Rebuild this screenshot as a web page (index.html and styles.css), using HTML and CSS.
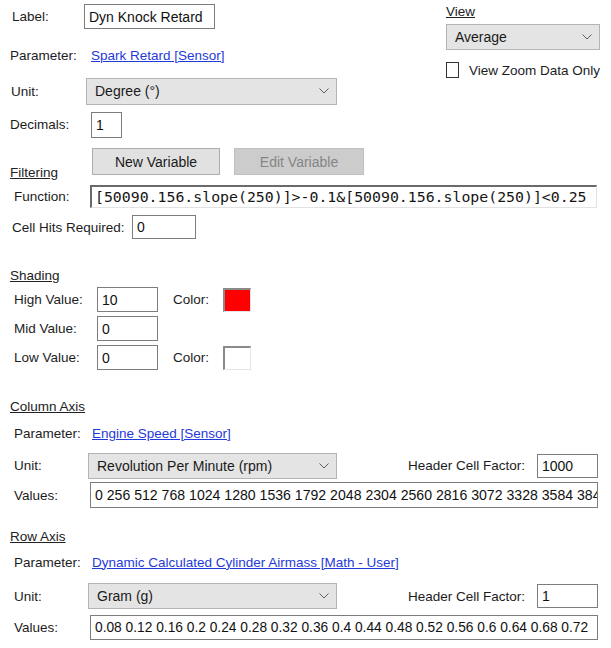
FILE: index.html
```html
<!DOCTYPE html>
<html lang="en">
<head>
    <meta charset="UTF-8">
    <meta name="viewport" content="width=device-width, initial-scale=1.0">
    <title>Histogram Settings</title>
    <link rel="stylesheet" href="styles.css">
</head>
<body>
    <div class="page">
        <div class="top">
            <div class="general">
                <div class="row r-label">
                    <span class="lbl w-label">Label:</span>
                    <input class="field f-label" type="text" value="Dyn Knock Retard">
                </div>
                <div class="row r-param">
                    <span class="lbl w-param">Parameter:</span>
                    <a href="#" class="link">Spark Retard [Sensor]</a>
                </div>
                <div class="row r-unit">
                    <span class="lbl w-unit">Unit:</span>
                    <div class="combo c-unit">
                        <span>Degree (&deg;)</span>
                        <svg class="chev" width="10" height="6" viewBox="0 0 10 6"><path d="M0.5 0.5 L5 5 L9.5 0.5" fill="none" stroke="#5f5f5f" stroke-width="1"/></svg>
                    </div>
                </div>
                <div class="row r-dec">
                    <span class="lbl w-dec">Decimals:</span>
                    <input class="field f-dec" type="text" value="1">
                </div>
            </div>
            <div class="view-panel">
                <div class="heading v-head">View</div>
                <div class="combo c-view">
                    <span>Average</span>
                    <svg class="chev" width="10" height="6" viewBox="0 0 10 6"><path d="M0.5 0.5 L5 5 L9.5 0.5" fill="none" stroke="#5f5f5f" stroke-width="1"/></svg>
                </div>
                <div class="check-row">
                    <span class="checkbox"></span>
                    <span class="lbl">View Zoom Data Only</span>
                </div>
            </div>
        </div>

        <div class="btn-row">
            <span class="heading filt-head">Filtering</span>
            <button class="btn">New Variable</button>
            <button class="btn btn-off">Edit Variable</button>
        </div>
        <div class="sub">
            <div class="row r-func">
                <span class="lbl w-func">Function:</span>
                <input class="field f-func" type="text" value="[50090.156.slope(250)]&gt;-0.1&amp;[50090.156.slope(250)]&lt;0.25">
            </div>
            <div class="row r-hits">
                <span class="lbl w-hits">Cell Hits Required:</span>
                <input class="field f-hits" type="text" value="0">
            </div>
        </div>

        <div class="heading sec-head shade-head">Shading</div>
        <div class="sub">
            <div class="row r-shade first">
                <span class="lbl w-shade">High Value:</span>
                <input class="field f-shade" type="text" value="10">
                <span class="lbl w-color">Color:</span>
                <span class="swatch red"></span>
            </div>
            <div class="row r-shade">
                <span class="lbl w-shade">Mid Value:</span>
                <input class="field f-shade" type="text" value="0">
            </div>
            <div class="row r-shade">
                <span class="lbl w-shade">Low Value:</span>
                <input class="field f-shade" type="text" value="0">
                <span class="lbl w-color">Color:</span>
                <span class="swatch"></span>
            </div>
        </div>

        <div class="heading sec-head col-head">Column Axis</div>
        <div class="sub">
            <div class="row r-aparam">
                <span class="lbl w-axis">Parameter:</span>
                <a href="#" class="link">Engine Speed [Sensor]</a>
            </div>
            <div class="row r-aunit">
                <span class="lbl w-axis-u">Unit:</span>
                <div class="combo c-axis">
                    <span>Revolution Per Minute (rpm)</span>
                    <svg class="chev" width="10" height="6" viewBox="0 0 10 6"><path d="M0.5 0.5 L5 5 L9.5 0.5" fill="none" stroke="#5f5f5f" stroke-width="1"/></svg>
                </div>
                <span class="lbl hcf">Header Cell Factor:</span>
                <input class="field f-hcf" type="text" value="1000">
            </div>
            <div class="row r-avals">
                <span class="lbl w-vals">Values:</span>
                <input class="field f-vals" type="text" value="0 256 512 768 1024 1280 1536 1792 2048 2304 2560 2816 3072 3328 3584 3840 4096 4352 4608">
            </div>
        </div>

        <div class="heading sec-head row-head">Row Axis</div>
        <div class="sub">
            <div class="row r-aparam r-rparam">
                <span class="lbl w-axis">Parameter:</span>
                <a href="#" class="link">Dynamic Calculated Cylinder Airmass [Math - User]</a>
            </div>
            <div class="row r-aunit r-runit">
                <span class="lbl w-axis-u">Unit:</span>
                <div class="combo c-axis">
                    <span>Gram (g)</span>
                    <svg class="chev" width="10" height="6" viewBox="0 0 10 6"><path d="M0.5 0.5 L5 5 L9.5 0.5" fill="none" stroke="#5f5f5f" stroke-width="1"/></svg>
                </div>
                <span class="lbl hcf">Header Cell Factor:</span>
                <input class="field f-hcf" type="text" value="1">
            </div>
            <div class="row r-avals r-rvals">
                <span class="lbl w-vals">Values:</span>
                <input class="field f-vals" type="text" value="0.08 0.12 0.16 0.2 0.24 0.28 0.32 0.36 0.4 0.44 0.48 0.52 0.56 0.6 0.64 0.68 0.72">
            </div>
        </div>
    </div>
</body>
</html>
```

FILE: styles.css
```css
body {
    margin: 0;
    background: #ffffff;
    font-family: "Liberation Sans", Arial, sans-serif;
    font-size: 13.5px;
    color: #1c1c1c;
}
.page {
    width: 611px;
    padding: 0 11px 0 10px;
    box-sizing: border-box;
}
.top {
    display: flex;
    height: 138px;
}
.general {
    flex: 1;
}
.row {
    display: flex;
    align-items: center;
}
.lbl {
    white-space: nowrap;
    flex-shrink: 0;
}
.link {
    color: #1f3ad8;
    text-decoration: underline;
    white-space: nowrap;
}
.heading {
    text-decoration: underline;
    line-height: 16px;
    height: 16px;
    color: #222;
}

/* inputs */
.field {
    box-sizing: border-box;
    margin: 0;
    border: 1px solid #7d7d7d;
    background: #fff;
    font-family: "Liberation Sans", Arial, sans-serif;
    font-size: 14px;
    color: #111;
    padding: 0 0 0 4px;
    outline: none;
}
.combo {
    box-sizing: border-box;
    display: flex;
    align-items: center;
    justify-content: space-between;
    background: #e4e4e4;
    border: 1px solid #b4b4b4;
    padding: 0 7px 0 8px;
    font-size: 14px;
    color: #1a1a1a;
}

/* general block */
.r-label { margin-top: 4px; height: 25px; }
.w-label { width: 74px; padding-left: 2px; box-sizing: border-box; }
.f-label { width: 131px; height: 25px; }
.r-param { margin-top: 13px; height: 26px; }
.w-param { width: 81px; }
.r-unit { margin-top: 10px; height: 26px; }
.w-unit { width: 76px; padding-left: 1px; box-sizing: border-box; }
.c-unit { width: 251px; height: 27px; }
.r-dec { margin-top: 7px; height: 27px; }
.w-dec { width: 81px; }
.f-dec { width: 31px; height: 26px; }

/* view */
.view-panel {
    width: 154px;
}
.v-head { margin-top: 4px; }
.c-view { margin-top: 4px; width: 154px; height: 26px; }
.check-row {
    display: flex;
    align-items: center;
    margin-top: 12px;
    height: 16px;
}
.checkbox {
    width: 16px;
    height: 16px;
    box-sizing: border-box;
    border: 1px solid #333;
    background: #fff;
    margin-right: 10px;
}

/* filtering */
.btn-row {
    display: flex;
    align-items: flex-end;
    margin-top: 10px;
    height: 27px;
}
.filt-head {
    width: 82px;
    margin-bottom: -6px;
}
.btn {
    box-sizing: border-box;
    height: 27px;
    width: 128px;
    margin: 0 14px 0 0;
    background: #e1e1e1;
    border: 1px solid #adadad;
    font-family: "Liberation Sans", Arial, sans-serif;
    font-size: 14px;
    color: #1a1a1a;
    padding: 0;
}
.btn-off {
    width: 130px;
    background: #cccccc;
    border-color: #bfbfbf;
    color: #858585;
}
.sub {
    padding-left: 4px;
}
.r-func { margin-top: 10px; height: 23px; }
.w-func { width: 76px; }
.f-func {
    flex: 1;
    margin-right: 3px;
    height: 23px;
    border-color: #6a6a6a #e2e2e2 #e2e2e2 #6a6a6a;
    border-width: 2px 1px 1px 2px;
    font-family: "DejaVu Sans Mono", "Liberation Mono", monospace;
    font-size: 14.85px;
    padding-left: 3px;
    color: #151515;
}
.r-hits { margin-top: 7px; height: 24px; }
.w-hits { width: 120px; margin-left: -2px; }
.f-hits { width: 64px; height: 24px; }

/* shading */
.sec-head { margin-top: 29px; }
.r-shade { margin-top: 4px; height: 25px; }
.r-shade.first { margin-top: 3px; }
.w-shade { width: 83px; }
.f-shade { width: 61px; height: 25px; }
.w-color { width: 50px; margin-left: 15px; }
.swatch {
    box-sizing: border-box;
    width: 28px;
    height: 24px;
    border: 1px solid;
    border-color: #8a8a8a #e6e6e6 #e6e6e6 #8a8a8a;
    border-width: 2px 1px 1px 2px;
    background: #fff;
}
.swatch.red { background: #ff0000; }

/* axes */
.r-aparam { margin-top: 10px; height: 16px; }
.w-axis { width: 78px; }
.r-aunit { margin-top: 12px; height: 25px; }
.w-axis-u { width: 74px; }
.c-axis { width: 249px; height: 26px; }
.hcf { margin-left: auto; margin-right: 12px; }
.f-hcf { width: 61px; height: 24px; margin-right: 2px; }
.r-avals { margin-top: 4px; height: 26px; }
.w-vals { width: 76px; }
.f-vals {
    flex: 1;
    height: 26px;
    margin-right: 2px;
    font-size: 14.1px;
}
.row-head { margin-top: 21px; }
.r-rparam { margin-top: 9px; }
.r-runit { margin-top: 14px; height: 24px; }
.r-rvals { margin-top: 7px; height: 25px; }
.r-rvals .f-vals { height: 25px; font-size: 13.75px; }
```
